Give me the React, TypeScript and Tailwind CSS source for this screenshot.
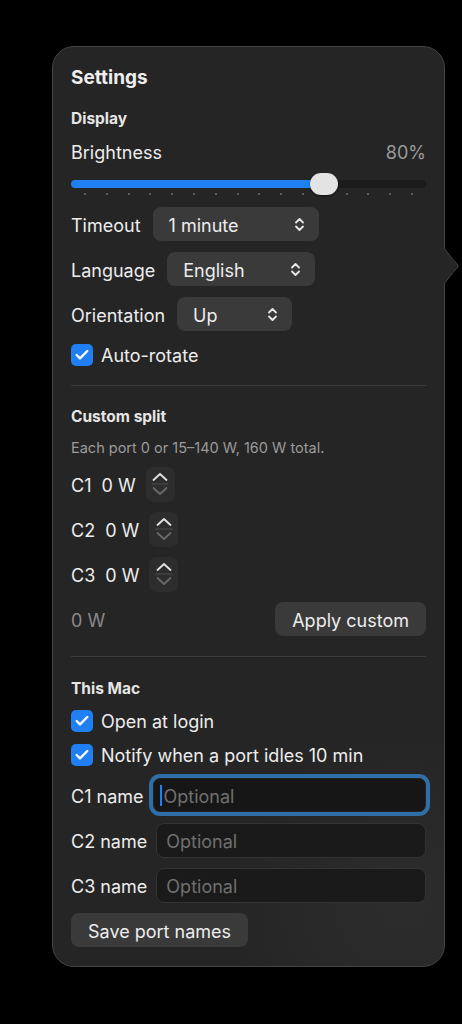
import { Check } from "lucide-react"

const font = { fontFamily: "Inter, 'Noto Sans', sans-serif" }

const Chevrons = () => (
  <svg width="11" height="15" viewBox="0 0 11 15" fill="none" stroke="#e8e8e8" strokeWidth="1.8" strokeLinecap="round" strokeLinejoin="round">
    <path d="M2 5.5 L5.5 2 L9 5.5" />
    <path d="M2 9.5 L5.5 13 L9 9.5" />
  </svg>
)

const Popup = ({ label, value, width }: { label: string; value: string; width: string }) => (
  <div className="flex h-[34px] items-center gap-[12px]">
    <span className="translate-y-[1px] text-[18px] text-[#ededed]">{label}</span>
    <div className={`flex h-[34px] items-center justify-between rounded-[8px] bg-[#3a3a3a] pl-[16px] pr-[14px] ${width}`}>
      <span className="translate-y-[1px] text-[18px] text-[#ededed]">{value}</span>
      <Chevrons />
    </div>
  </div>
)

const CheckRow = ({ label }: { label: string }) => (
  <div className="flex h-[23px] items-center gap-[8px]">
    <div className="flex h-[22px] w-[22px] items-center justify-center rounded-[5px] bg-[#1f7ff3]">
      <Check size={16} strokeWidth={3.5} className="text-white" />
    </div>
    <span className="translate-y-[1px] text-[18px] text-[#ededed]">{label}</span>
  </div>
)

const Stepper = () => (
  <div className="flex h-[35px] w-[29px] flex-col items-center justify-center rounded-[7px] bg-[#2d2d2d]">
    <svg width="20" height="28" viewBox="0 0 20 28" fill="none" strokeLinecap="round" strokeLinejoin="round">
      <path d="M3.5 10 L10 4 L16.5 10" stroke="#e2e2e2" strokeWidth="1.8" />
      <line x1="2" y1="14" x2="18" y2="14" stroke="#4e4e4e" strokeWidth="1" />
      <path d="M3.5 18 L10 24 L16.5 18" stroke="#6a6a6a" strokeWidth="1.8" />
    </svg>
  </div>
)

const PortRow = ({ port }: { port: string }) => (
  <div className="flex h-[34px] items-center">
    <span className="translate-y-[1px] text-[18px] text-[#ededed]">{port}</span>
    <span className="ml-[10px] translate-y-[1px] text-[18px] text-[#ededed]">0 W</span>
    <div className="ml-[10px]">
      <Stepper />
    </div>
  </div>
)

const NameRow = ({ label, focused }: { label: string; focused?: boolean }) => (
  <div className="flex h-[34px] items-center gap-[9px]">
    <span className="shrink-0 translate-y-[1px] text-[18px] text-[#ededed]">{label}</span>
    {focused ? (
      <div className="flex h-[34px] flex-1 items-center rounded-[7px] border border-[#222] bg-[#161616] pl-[6px] ring-[4px] ring-[#2f6ea6]">
        <div className="h-[21px] w-[2px] bg-[#1f80f2]" />
        <span className="ml-[2px] translate-y-[1px] text-[18px] text-[#707070]">Optional</span>
      </div>
    ) : (
      <div className="flex h-[35px] flex-1 items-center rounded-[8px] border border-[#333] bg-[#1a1a1a] pl-[9px]">
        <span className="translate-y-[1px] text-[18px] text-[#707070]">Optional</span>
      </div>
    )}
  </div>
)

export default function App() {
  const ticks = Array.from({ length: 16 })
  return (
    <div className="min-h-screen bg-black pl-[52px] pt-[46px]" style={font}>
      <div className="relative w-[393px]">
        <div className="relative overflow-hidden rounded-[22px] border border-[#444] bg-[#252525] px-[18px] pb-[19px] pt-[18px]">
          <div className="pointer-events-none absolute -bottom-[120px] -right-[140px] h-[360px] w-[360px] rounded-full bg-[radial-gradient(circle,rgba(255,255,255,0.035),rgba(255,255,255,0)_70%)]" />
          <div className="relative flex flex-col">
            <div className="flex h-[24px] translate-y-[1px] items-center text-[19px] font-bold text-[#eeeeee]">Settings</div>

            <div className="mt-[19px] flex h-[20px] translate-y-[1px] items-center text-[15.5px] font-bold text-[#e6e6e6]">Display</div>

            <div className="mt-[11px] flex h-[24px] items-center justify-between">
              <span className="translate-y-[1px] text-[18px] text-[#ededed]">Brightness</span>
              <span className="translate-y-[1px] text-[18px] text-[#9b9b9b]">80%</span>
            </div>

            <div className="relative mt-[9px] h-[26px]">
              <div className="absolute left-0 right-0 top-[8px] h-[8px] rounded-full bg-[#1b1b1b]" />
              <div className="absolute left-0 top-[8px] h-[8px] w-[253px] rounded-full bg-[#1f7ff3]" />
              <div className="absolute left-[13px] right-[13px] top-[21px] flex justify-between">
                {ticks.map((_, i) => (
                  <div key={i} className="h-[2px] w-[2px] rounded-full bg-[#707070]" />
                ))}
              </div>
              <div className="absolute left-[239px] top-[1px] h-[22px] w-[28px] rounded-full bg-[#e3e3e3] shadow-[0_1px_2px_rgba(0,0,0,0.5)]" />
            </div>

            <div className="mt-[9px] flex flex-col gap-[11px]">
              <Popup label="Timeout" value="1 minute" width="w-[166px]" />
              <Popup label="Language" value="English" width="w-[148px]" />
              <Popup label="Orientation" value="Up" width="w-[115px]" />
            </div>

            <div className="mt-[12px]">
              <CheckRow label="Auto-rotate" />
            </div>

            <div className="mt-[19px] h-px bg-[#3c3c3c]" />

            <div className="mt-[20px] flex h-[20px] translate-y-[1px] items-center text-[15.5px] font-bold text-[#e6e6e6]">Custom split</div>
            <div className="mt-[11px] flex h-[20px] translate-y-[1px] items-center text-[14.5px] text-[#9b9b9b]">
              Each port 0 or 15–140 W, 160 W total.
            </div>

            <div className="mt-[10px] flex flex-col gap-[11px]">
              <PortRow port="C1" />
              <PortRow port="C2" />
              <PortRow port="C3" />
            </div>

            <div className="mt-[11px] flex h-[34px] items-center justify-between">
              <span className="translate-y-[1px] text-[18px] text-[#8a8a8a]">0 W</span>
              <div className="flex h-[34px] items-center rounded-[8px] bg-[#3a3a3a] px-[17px] text-[18px] text-[#ededed]">
                <span className="translate-y-[1px]">Apply custom</span>
              </div>
            </div>

            <div className="mt-[20px] h-px bg-[#3c3c3c]" />

            <div className="mt-[21px] flex h-[20px] translate-y-[1px] items-center text-[15.5px] font-bold text-[#e6e6e6]">This Mac</div>

            <div className="mt-[11px] flex flex-col gap-[11px]">
              <CheckRow label="Open at login" />
              <CheckRow label="Notify when a port idles 10 min" />
            </div>

            <div className="mt-[12px] flex flex-col gap-[11px]">
              <NameRow label="C1 name" focused />
              <NameRow label="C2 name" />
              <NameRow label="C3 name" />
            </div>

            <div className="mt-[11px] flex">
              <div className="flex h-[34px] items-center rounded-[8px] bg-[#3a3a3a] px-[17px] text-[18px] text-[#ededed]">
                <span className="translate-y-[1px]">Save port names</span>
              </div>
            </div>
          </div>
        </div>

        <svg className="absolute right-[-15px] top-[201px]" width="17" height="38" viewBox="0 0 17 38" fill="none">
          <path d="M0 0 L2 2 C5 6 9 12 14 17 C15.5 18.5 15.5 19.5 14 21 C9 26 5 32 2 36 L0 38 Z" fill="#252525" />
          <path d="M1 1 C5 6 9 12 14 17 C15.5 18.5 15.5 19.5 14 21 C9 26 5 32 1 37" stroke="#444" strokeWidth="1" />
        </svg>
      </div>
    </div>
  )
}
